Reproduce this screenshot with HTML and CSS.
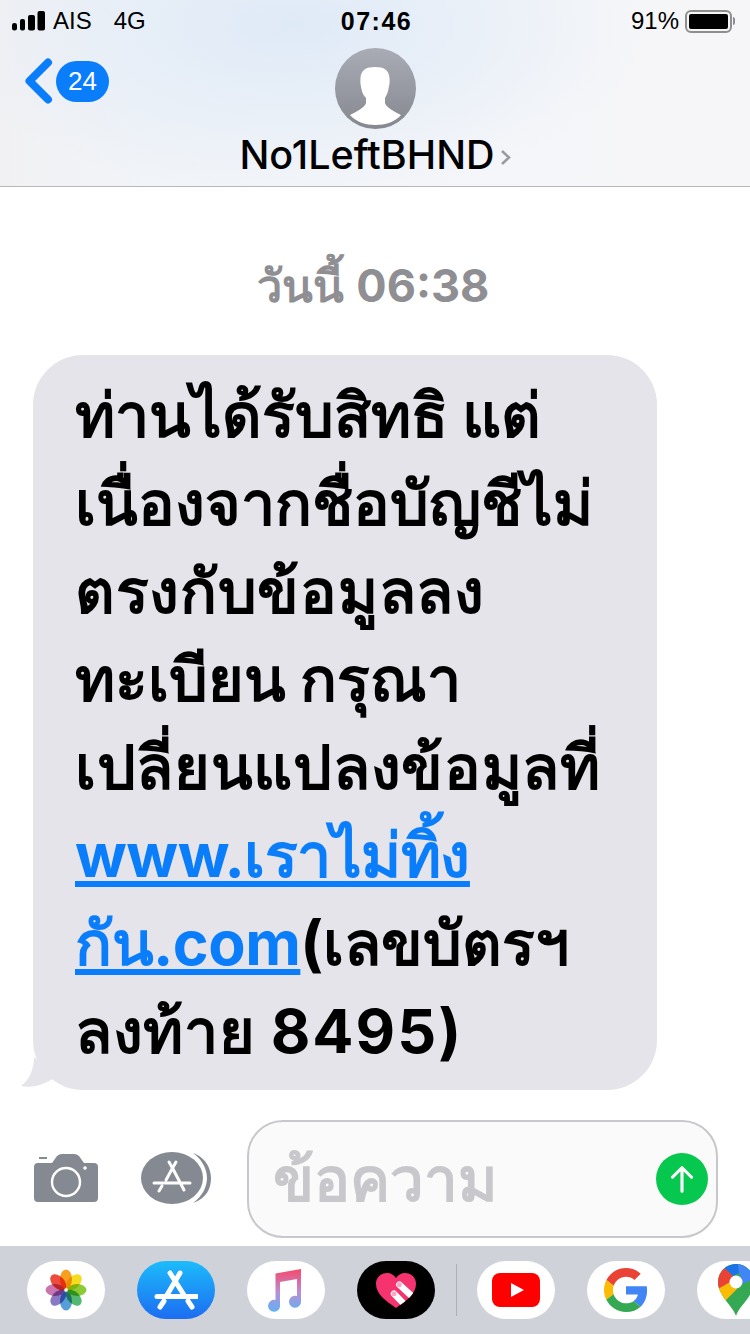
FILE: index.html
```html
<!DOCTYPE html>
<html lang="th">
<head>
    <meta charset="UTF-8">
    <meta name="viewport" content="width=device-width, initial-scale=1.0">
    <title>No1LeftBHND</title>
    <link rel="stylesheet" href="styles.css">
</head>
<body>
<div class="phone">
    <header class="top">
        <div class="status">
            <div class="status-left">
                <svg class="signal" width="33" height="20" viewBox="0 0 33 20">
                    <rect x="0" y="12" width="5" height="7.500" rx="2.300" fill="#000"/>
                    <rect x="8" y="8" width="5" height="11.500" rx="2" fill="#000"/>
                    <rect x="16" y="4" width="7" height="15.500" rx="2" fill="#000"/>
                    <rect x="25.500" y="0" width="7.500" height="19.500" rx="2" fill="#000"/>
                </svg>
                <span class="carrier">AIS</span>
                <span class="net">4G</span>
            </div>
            <div class="clock">07:46</div>
            <div class="status-right">
                <span class="pct">91%</span>
                <span class="battery"><span class="battery-fill"></span></span>
                <span class="battery-tip"></span>
            </div>
        </div>
        <div class="nav">
            <div class="back">
                <svg width="28" height="46" viewBox="0 0 28 46">
                    <path d="M23 4.500 L4.500 23 L23 41.500" fill="none" stroke="#0a7dfb" stroke-width="8" stroke-linecap="round" stroke-linejoin="round"/>
                </svg>
                <span class="badge">24</span>
            </div>
            <svg class="avatar" width="81" height="81" viewBox="0 0 81 81">
                <defs>
                    <linearGradient id="avatarGrad" x1="0" y1="0" x2="0" y2="1">
                        <stop offset="0" stop-color="#a9acb5"/>
                        <stop offset="1" stop-color="#85888f"/>
                    </linearGradient>
                </defs>
                <circle cx="40.500" cy="40.500" r="40.500" fill="url(#avatarGrad)"/>
                <path d="M40 19 C49 19 54 22 54.500 30 C55 36 54 38 53.500 41 C53 45 51 48 50 50 V55 C51 59 58 63 66 67 C60 74 50 77 40.500 77 C31 77 21 74 15 67 C23 63 30 59 31 55 V50 C29 48 27 45 26.500 41 C26 38 25 36 25.500 30 C26 22 31 19 40 19 Z" fill="#fff"/>
            </svg>
            <div class="name">No1LeftBHND<svg class="name-arrow" width="11" height="17" viewBox="0 0 11 17"><path d="M2 2 L9 8.500 L2 15" fill="none" stroke="#9a9ca3" stroke-width="2.600"/></svg></div>
        </div>
    </header>

    <main class="thread">
        <div class="stamp"><b>วันนี้</b> <b>06:38</b></div>
        <div class="bubble">
            <span class="line">ท่านได้รับสิทธิ แต่</span>
            <span class="line">เนื่องจากชื่อบัญชีไม่</span>
            <span class="line line-wide">ตรงกับข้อมูลลง</span>
            <span class="line">ทะเบียน กรุณา</span>
            <span class="line line-wide">เปลี่ยนแปลงข้อมูลที่</span>
            <span class="line line-tight"><a href="#">www.เราไม่ทิ้ง</a></span>
            <span class="line"><a class="line-tight" href="#">กัน.com</a>(เลขบัตรฯ</span>
            <span class="line line-wide">ลงท้าย <span class="num">8495)</span></span>
            <svg class="tail" width="36" height="34" viewBox="0 0 36 34">
                <path d="M13 0 C13 12 9 22 0 29 C10 31 22 29 34 20 Z" fill="#e4e4ea"/>
            </svg>
        </div>
    </main>

    <div class="compose">
        <svg class="cam" width="65" height="49" viewBox="0 0 65 49">
            <path d="M4 10 H18 L23 3 Q25 1 28 1 H40 Q43 1 45 3 L50 10 H60 Q64 10 64 14 V45 Q64 49 60 49 H4 Q0 49 0 45 V14 Q0 10 4 10 Z" fill="#858a92"/>
            <rect x="5" y="4" width="8" height="2" fill="#858a92"/>
            <circle cx="32" cy="29" r="14" fill="none" stroke="#fff" stroke-width="2.400"/>
            <circle cx="51" cy="15" r="1.800" fill="#fff"/>
        </svg>
        <svg class="apps" width="70" height="52" viewBox="0 0 70 52">
            <path d="M52 1 C66 6 70 18 70 26 C70 36 66 46 52 51 C62 44 66 34 66 26 C66 18 62 8 52 1 Z" fill="#858a92"/>
            <ellipse cx="31" cy="26" rx="31" ry="26" fill="#858a92"/>
            <path d="M28 10 L32 17 L43 38 M35 10 L31 17 L25 28 M21 34 L18 39 M13 31 H49" fill="none" stroke="#fff" stroke-width="3" stroke-linecap="round" stroke-linejoin="round"/>
        </svg>
        <div class="field">
            <span class="hint">ข้อความ</span>
            <span class="send">
                <svg width="26" height="32" viewBox="0 0 30 34">
                    <path d="M15 31 V5 M4 15 L15 4 L26 15" fill="none" stroke="#fff" stroke-width="3.600" stroke-linecap="round" stroke-linejoin="round"/>
                </svg>
            </span>
        </div>
    </div>

    <div class="tray">
        <span class="pill">
            <svg width="44" height="44" viewBox="-22 -22 44 44">
                <ellipse class="petal" cx="0" cy="-11" rx="6" ry="9.500" fill="#f6a020"/>
                <ellipse class="petal" cx="0" cy="-11" rx="6" ry="9.500" fill="#f5dc1e" transform="rotate(45)"/>
                <ellipse class="petal" cx="0" cy="-11" rx="6" ry="9.500" fill="#8ccb38" transform="rotate(90)"/>
                <ellipse class="petal" cx="0" cy="-11" rx="6" ry="9.500" fill="#55b872" transform="rotate(135)"/>
                <ellipse class="petal" cx="0" cy="-11" rx="6" ry="9.500" fill="#559ed8" transform="rotate(180)"/>
                <ellipse class="petal" cx="0" cy="-11" rx="6" ry="9.500" fill="#8a7ac4" transform="rotate(225)"/>
                <ellipse class="petal" cx="0" cy="-11" rx="6" ry="9.500" fill="#c976ae" transform="rotate(270)"/>
                <ellipse class="petal" cx="0" cy="-11" rx="6" ry="9.500" fill="#ee4b3f" transform="rotate(315)"/>
            </svg>
        </span>
        <span class="pill pill-store">
            <svg width="44" height="44" viewBox="0 0 44 44">
                <path d="M16 5 L30 27 M34 33 L38 39 M26 5 L13 27 M10 33 L6 39 M3 28.500 H43" fill="none" stroke="#fff" stroke-width="5" stroke-linecap="round"/>
            </svg>
        </span>
        <span class="pill">
            <svg width="40" height="46" viewBox="0 0 40 46">
                <defs>
                    <linearGradient id="noteGrad" x1="0" y1="0" x2="0" y2="1">
                        <stop offset="0" stop-color="#f8486a"/>
                        <stop offset=".55" stop-color="#b88fd6"/>
                        <stop offset="1" stop-color="#5fb2f4"/>
                    </linearGradient>
                </defs>
                <path d="M9.500 6.500 L35 2 V34 A6 6 0 1 1 31 29 V12 L14 15 V38 A6 6 0 1 1 9.500 33 Z" fill="url(#noteGrad)"/>
            </svg>
        </span>
        <span class="pill pill-dark">
            <svg width="40" height="35" viewBox="0 0 40 35">
                <defs>
                    <clipPath id="heartClip"><path d="M20 35 C10 28 0 21 0 11 C0 4 5 0 11 0 C15 0 18 2 20 5 C22 2 25 0 29 0 C35 0 40 4 40 11 C40 21 30 28 20 35 Z"/></clipPath>
                </defs>
                <path d="M20 35 C10 28 0 21 0 11 C0 4 5 0 11 0 C15 0 18 2 20 5 C22 2 25 0 29 0 C35 0 40 4 40 11 C40 21 30 28 20 35 Z" fill="#f5346f"/>
                <g clip-path="url(#heartClip)">
                    <path d="M23.300 11.700 L40 27 M18 20.700 L30 33" fill="none" stroke="#fff" stroke-width="6.500" stroke-linecap="round"/>
                </g>
                <circle cx="23.300" cy="11.700" r="2.500" fill="#f9a9c4"/>
                <circle cx="18" cy="20.700" r="2.500" fill="#f9a9c4"/>
            </svg>
        </span>
        <span class="tray-line"></span>
        <span class="pill">
            <svg width="48" height="34" viewBox="0 0 48 34">
                <rect width="48" height="34" rx="8" fill="#fe0000"/>
                <path d="M19 10 L32 17 L19 24 Z" fill="#fff"/>
            </svg>
        </span>
        <span class="pill">
            <svg width="44" height="44" viewBox="0 0 48 48">
                <path fill="#ea4335" d="M24 9.500c3.540 0 6.710 1.220 9.210 3.600l6.850-6.850C35.900 2.380 30.470 0 24 0 14.620 0 6.510 5.380 2.560 13.220l7.980 6.190C12.430 13.720 17.740 9.500 24 9.500z"/>
                <path fill="#4285f4" d="M46.980 24.550c0-1.570-.15-3.090-.38-4.550H24v9.020h12.940c-.58 2.960-2.260 5.480-4.780 7.180l7.730 6c4.510-4.180 7.090-10.360 7.090-17.650z"/>
                <path fill="#fbbc05" d="M10.530 28.590c-.48-1.450-.76-2.990-.76-4.590s.27-3.140.76-4.590l-7.980-6.190C.92 16.460 0 20.120 0 24c0 3.880.92 7.540 2.560 10.780l7.970-6.190z"/>
                <path fill="#34a853" d="M24 48c6.480 0 11.930-2.130 15.890-5.810l-7.730-6c-2.150 1.450-4.920 2.300-8.160 2.300-6.260 0-11.570-4.220-13.470-9.910l-7.980 6.190C6.510 42.620 14.620 48 24 48z"/>
            </svg>
        </span>
        <span class="pill">
            <svg width="36" height="52" viewBox="0 0 36 52">
                <defs>
                    <clipPath id="pinClip"><path d="M18 52 C15 42 0 32 0 18 A18 18 0 0 1 36 18 C36 32 21 42 18 52 Z"/></clipPath>
                </defs>
                <g clip-path="url(#pinClip)">
                    <rect width="36" height="52" fill="#34a853"/>
                    <polygon points="5,3 20,-1 21,9 15,12" fill="#1a73e8"/>
                    <polygon points="20,-1 38,-1 38,13 25,20 21,9" fill="#4285f4"/>
                    <polygon points="5,3 15,12 12,19 0,26 -2,10" fill="#ea4335"/>
                    <polygon points="0,25 12,18 19,25 7,37" fill="#fbbc05"/>
                </g>
                <circle cx="18" cy="18" r="6.500" fill="#fff"/>
            </svg>
        </span>
    </div>
</div>
</body>
</html>
```

FILE: styles.css
```css
* {
    box-sizing: border-box;
}
html, body {
    margin: 0;
    padding: 0;
}
body {
    width: 750px;
    height: 1334px;
    overflow: hidden;
    background: #fff;
    font-family: "Inter", "Liberation Sans", "Noto Sans", "DejaVu Sans", sans-serif;
    color: #000;
}
.phone {
    display: flex;
    flex-direction: column;
    height: 1334px;
}

/* top bar */
.top {
    height: 187px;
    border-bottom: 1px solid #b7b8bb;
    background:
        radial-gradient(ellipse 360px 170px at 290px 25px, #dfeaf7 0%, rgba(223,234,247,0) 100%),
        linear-gradient(90deg, #f1f1f3 0%, #f1f4f8 20%, #f5f6f9 70%, #f6f6f8 100%);
}
.status {
    height: 40px;
    padding: 2px 12px 0;
    display: grid;
    grid-template-columns: 1fr auto 1fr;
    align-items: center;
    font-size: 24px;
    font-family: "Liberation Sans", sans-serif;
}
.status-left {
    display: flex;
    align-items: center;
}
.carrier {
    margin-left: 8px;
}
.net {
    margin-left: 22px;
}
.clock {
    font-weight: 700;
    font-size: 25px;
    letter-spacing: 1.500px;
    padding-left: 3px;
}
.status-right {
    display: flex;
    align-items: center;
    justify-content: flex-end;
    padding-right: 3px;
}
.battery {
    margin-left: 6px;
    width: 47px;
    height: 23px;
    border: 2px solid #8e8e8e;
    border-radius: 6px;
    padding: 2px;
    display: block;
}
.battery-fill {
    display: block;
    height: 100%;
    background: #000;
    border-radius: 2px;
}
.battery-tip {
    width: 2px;
    height: 8px;
    margin-left: 1px;
    background: #8e8e8e;
    border-radius: 0 2px 2px 0;
}
.nav {
    position: relative;
    display: flex;
    flex-direction: column;
    align-items: center;
    padding-top: 8px;
}
.back {
    position: absolute;
    left: 25px;
    top: 18px;
    display: flex;
    align-items: center;
    gap: 3px;
}
.badge {
    width: 53px;
    height: 41px;
    border-radius: 21px;
    background: #0a7dfb;
    color: #fff;
    font-size: 26px;
    font-family: "Liberation Sans", sans-serif;
    text-align: center;
    line-height: 41px;
}
.avatar {
    display: block;
}
.name {
    margin-top: 2px;
    font-size: 39.500px;
    font-weight: 500;
    line-height: 48px;
    display: flex;
    align-items: center;
}
.name-arrow {
    margin-left: 5px;
    margin-top: 4px;
}

/* message area */
.thread {
    flex: 1;
    padding: 0 0 0 33px;
}
.stamp {
    margin-left: -33px;
    padding: 68px 4px 0 0;
    height: 168px;
    text-align: center;
    font-size: 45px;
    line-height: 62px;
    color: #8e8e93;
}
.bubble {
    position: relative;
    width: 624px;
    height: 735px;
    padding: 16px 20px 0 42px;
    border-radius: 50px;
    background: #e4e4ea;
    font-size: 61px;
    font-weight: 700;
    line-height: 88px;
}
.line {
    display: block;
    white-space: nowrap;
}
.line-wide {
    letter-spacing: .7px;
}
.line-tight {
    letter-spacing: -.5px;
}
.num {
    letter-spacing: 2px;
}
.bubble a {
    color: #0a7dfb;
    text-decoration: underline;
}
.tail {
    position: absolute;
    left: -12px;
    bottom: -1px;
}

/* input row */
.compose {
    height: 156px;
    padding: 30px 32px 0 34px;
    display: flex;
    align-items: flex-start;
}
.cam {
    margin-top: 33px;
}
.apps {
    margin-top: 32px;
    margin-left: 42px;
}
.field {
    margin-left: 36px;
    flex: 1;
    height: 118px;
    border: 2px solid #c7c7cc;
    border-radius: 36px;
    background: #fafafb;
    display: flex;
    align-items: center;
    justify-content: space-between;
    padding: 0 8px 0 24px;
}
.hint {
    font-size: 60px;
    font-weight: 700;
    color: #c7c7cc;
}
.send {
    width: 52px;
    height: 52px;
    border-radius: 50%;
    background: #07c84f;
    display: flex;
    align-items: center;
    justify-content: center;
}

/* app strip */
.tray {
    height: 88px;
    background: #cfd2d8;
    display: flex;
    align-items: center;
    padding-left: 27px;
    gap: 32px;
    overflow: hidden;
}
.pill {
    flex: none;
    width: 78px;
    height: 58px;
    border-radius: 29px;
    background: #fff;
    display: flex;
    align-items: center;
    justify-content: center;
    isolation: isolate;
}
.petal {
    mix-blend-mode: multiply;
}
.pill-store {
    background: linear-gradient(#1cbcfb, #1d6cf1);
}
.pill-dark {
    background: #000;
}
.tray-line {
    flex: none;
    width: 1px;
    height: 52px;
    margin: 0 -12px 0 -11px;
    background: #aeb0b6;
}
```
